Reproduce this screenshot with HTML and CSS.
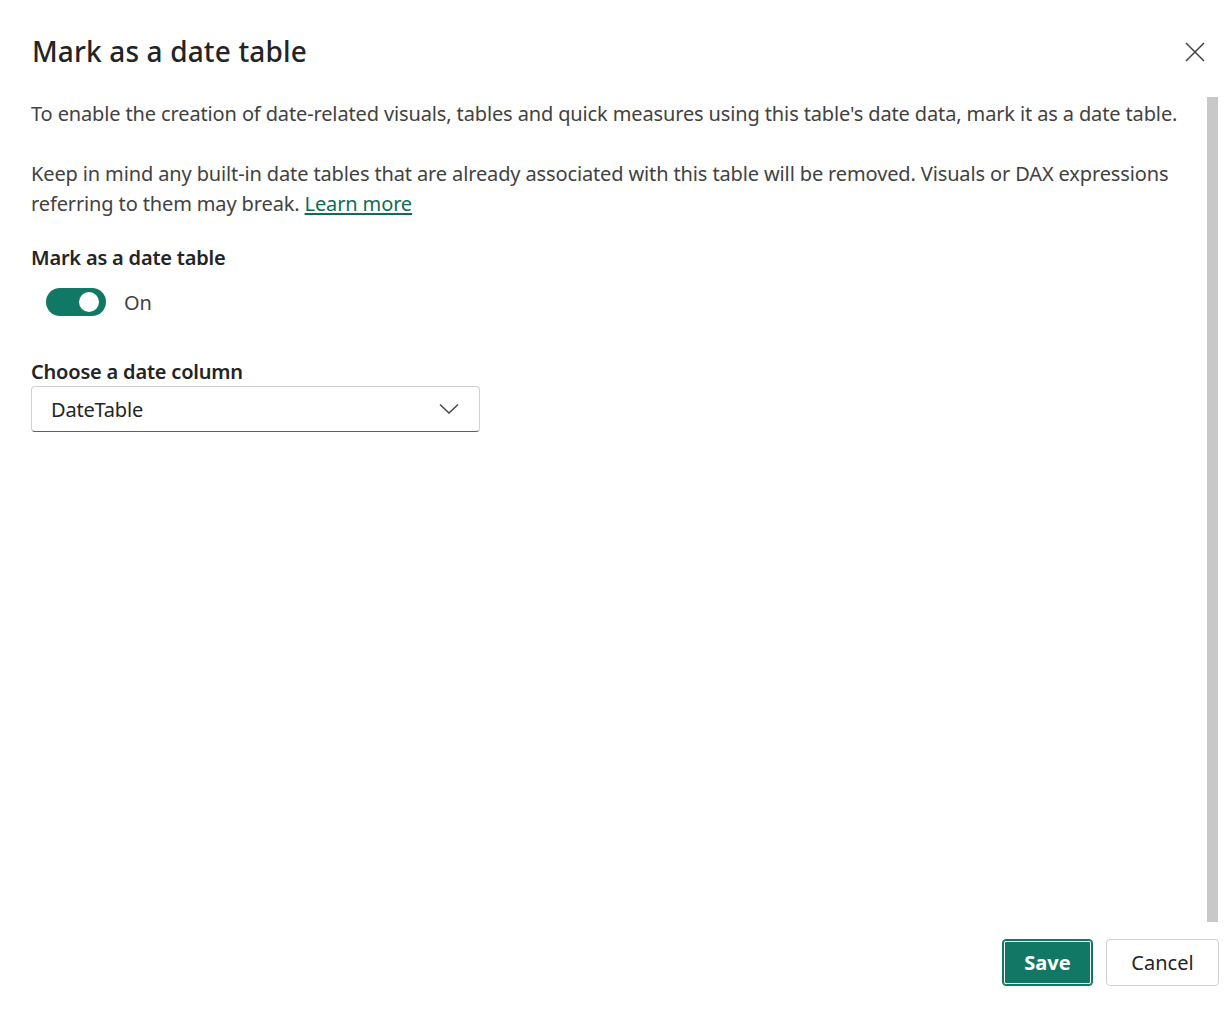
FILE: index.html
```html
<!DOCTYPE html>
<html>
<head>
<meta charset="utf-8">
<link rel="stylesheet" href="styles.css">
</head>
<body>
<div class="dialog">
  <header class="header">
    <h1 class="title">Mark as a date table</h1>
    <button class="close" aria-label="Close">
      <svg width="20" height="20" viewBox="0 0 20 20"><path d="M1 1 L19 19 M19 1 L1 19" stroke="#424242" stroke-width="1.5" fill="none"/></svg>
    </button>
  </header>
  <div class="body">
    <div class="content">
      <p class="para">To enable the creation of date-related visuals, tables and quick measures using this table's date data, mark it as a date table.</p>
      <p class="para second">Keep in mind any built-in date tables that are already associated with this table will be removed. Visuals or DAX expressions referring to them may break. <a class="link" href="#">Learn more</a></p>
      <div class="label toggle-label">Mark as a date table</div>
      <div class="toggle-row">
        <span class="switch"><span class="knob"></span></span>
        <span class="toggle-text">On</span>
      </div>
      <div class="label column-label">Choose a date column</div>
      <div class="select">
        <span class="select-text">DateTable</span>
        <svg class="chev" width="20" height="12" viewBox="0 0 20 12"><path d="M1 1.5 L10 10 L19 1.5" stroke="#424242" stroke-width="1.4" fill="none"/></svg>
      </div>
    </div>
    <div class="scrollbar"></div>
  </div>
  <footer class="footer">
    <button class="btn primary">Save</button>
    <button class="btn secondary">Cancel</button>
  </footer>
</div>
</body>
</html>
```
FILE: styles.css
```css
html, body {
  margin: 0;
  padding: 0;
  background: #ffffff;
}
body {
  font-family: "Noto Sans", "Open Sans", sans-serif;
  color: #242424;
}
.dialog {
  height: 1015px;
  display: flex;
  flex-direction: column;
  box-sizing: border-box;
}
.header {
  display: flex;
  align-items: flex-start;
  justify-content: space-between;
  padding: 31px 21px 0 32px;
  height: 67px;
  box-sizing: border-box;
}
.title {
  margin: 0;
  font-size: 28px;
  font-weight: 500;
  line-height: 40px;
  color: #242424;
  letter-spacing: 0.15px;
}
.close {
  border: 0;
  background: none;
  padding: 0;
  width: 20px;
  height: 20px;
  display: flex;
  margin-top: 11px;
}
.body {
  flex: 1;
  display: flex;
  padding-top: 32px;
  min-height: 0;
}
.content {
  flex: 1;
  padding-left: 31px;
  padding-right: 20px;
}
.scrollbar {
  width: 11px;
  background: #c8c8c8;
  margin-right: 8px;
  margin-top: -2px;
  height: 825px;
}
.para {
  margin: 0;
  font-size: 20px;
  line-height: 30px;
  color: #424242;
  letter-spacing: -0.13px;
}
.second {
  margin-top: 30px;
}
.link {
  color: #0f6b5a;
  text-decoration: underline;
  text-underline-offset: 2px;
}
.label {
  font-size: 20px;
  font-weight: 600;
  line-height: 28px;
  color: #242424;
  letter-spacing: -0.2px;
}
.toggle-label {
  margin-top: 25px;
}
.toggle-row {
  display: flex;
  align-items: center;
  margin-top: 16px;
  padding-left: 15px;
  height: 28px;
}
.switch {
  width: 60px;
  height: 28px;
  border-radius: 14px;
  background: #117865;
  position: relative;
  display: inline-block;
}
.knob {
  position: absolute;
  width: 20px;
  height: 20px;
  border-radius: 50%;
  background: #ffffff;
  right: 7px;
  top: 4px;
}
.toggle-text {
  margin-left: 18px;
  font-size: 20px;
  color: #424242;
}
.column-label {
  margin-top: 42px;
}
.select {
  margin-top: 0;
  width: 449px;
  height: 46px;
  box-sizing: border-box;
  border: 1px solid #d1d1d1;
  border-bottom-color: #616161;
  border-radius: 4px;
  display: flex;
  align-items: center;
  justify-content: space-between;
  padding: 0 20px 0 19px;
}
.select-text {
  font-size: 20px;
  color: #242424;
  letter-spacing: -0.2px;
}
.footer {
  display: flex;
  justify-content: flex-end;
  gap: 13px;
  padding: 0 7px 29px 0;
}
.btn {
  height: 47px;
  border-radius: 4px;
  font-family: "Noto Sans", "Open Sans", sans-serif;
  font-size: 20px;
  padding: 0;
  box-sizing: border-box;
}
.primary {
  width: 91px;
  background: #117865;
  color: #ffffff;
  font-weight: 700;
  border: 1px solid #117865;
  box-shadow: inset 0 0 0 1px #117865, inset 0 0 0 2px #ffffff;
}
.secondary {
  width: 113px;
  background: #ffffff;
  border: 1px solid #d1d1d1;
  color: #242424;
}
```
